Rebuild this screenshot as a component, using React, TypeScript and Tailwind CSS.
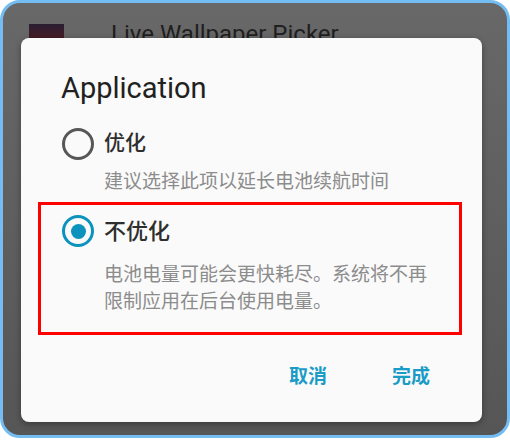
import { useState } from "react";

const cjk = "font-['Roboto','Noto_Sans_CJK_SC',sans-serif]";

function Radio({ checked }: { checked: boolean }) {
  return checked ? (
    <span className="w-[32px] h-[32px] rounded-full border-[3.5px] border-[#0b93bd] flex items-center justify-center shrink-0">
      <span className="w-[15px] h-[15px] rounded-full bg-[#0b93bd]" />
    </span>
  ) : (
    <span className="w-[32px] h-[32px] rounded-full border-[3.5px] border-[#575757] shrink-0" />
  );
}

export default function App() {
  const [choice, setChoice] = useState<"opt" | "none">("none");

  return (
    <div className={`w-[510px] h-[440px] bg-white ${cjk}`}>
      <div className="relative h-[438px] rounded-[20px] border-[3px] border-[#74bdf2] bg-gradient-to-b from-[#686868] to-[#565656] overflow-hidden">
        {/* list behind the dialog */}
        <div className="flex items-start pt-[21px] pl-[26px]">
          <div className="w-[35px] h-[16px] bg-gradient-to-b from-[#2a1d33] to-[#4a1b22]" />
          <div className="ml-[47px] -mt-[5px] text-[24px] leading-[30px] text-[#1f1f1f]">
            Live Wallpaper Picker
          </div>
        </div>

        {/* dialog */}
        <div className="absolute left-[18px] top-[35px] w-[461px] h-[384px] rounded-[8px] bg-[#fafafa] shadow-[0_2px_6px_rgba(0,0,0,0.35)] pt-[35px]">
          <div className="pl-[40px] text-[29px] leading-[30px] text-[#212121]">
            Application
          </div>

          <div className="pl-[41px] mt-[25px] cursor-pointer" onClick={() => setChoice("opt")}>
            <div className="flex items-center h-[32px]">
              <Radio checked={choice === "opt"} />
              <span className="ml-[10px] text-[21px] font-medium text-[#2e2e2e]">优化</span>
            </div>
            <div className="ml-[42px] mt-[8px] text-[19px] leading-[27px] text-[#8c8c8c]">
              建议选择此项以延长电池续航时间
            </div>
          </div>

          <div
            className="ml-[17px] mr-[20px] mt-[7px] border-[3px] border-[#ff0000] pl-[21px] pt-[10px] pb-[17px] cursor-pointer"
            onClick={() => setChoice("none")}
          >
            <div className="flex items-center h-[32px]">
              <Radio checked={choice === "none"} />
              <span className="ml-[10px] text-[22px] font-medium text-[#2e2e2e]">不优化</span>
            </div>
            <div className="ml-[42px] mt-[14px] w-[330px] text-[19px] leading-[27px] text-[#8c8c8c]">
              电池电量可能会更快耗尽。系统将不再限制应用在后台使用电量。
            </div>
          </div>

          <div className="flex justify-end items-center h-[40px] mt-[22px] pr-[52px] gap-[65px] text-[19px] font-bold text-[#1a9cc6]">
            <button>取消</button>
            <button>完成</button>
          </div>
        </div>
      </div>
    </div>
  );
}
